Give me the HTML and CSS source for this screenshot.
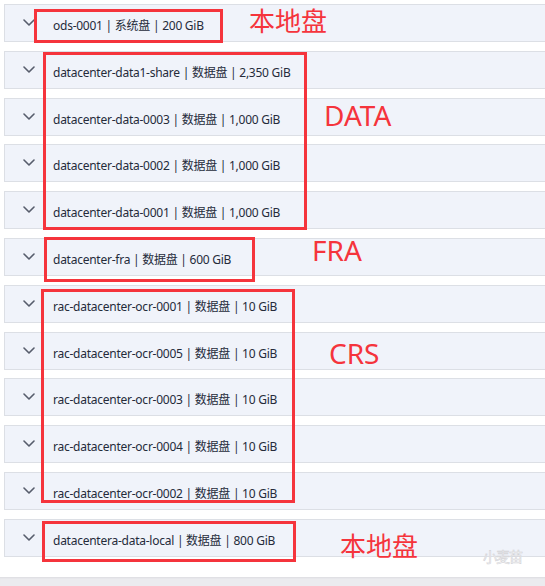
FILE: index.html
```html
<!DOCTYPE html>
<html lang="zh">
<head>
<meta charset="utf-8">
<title>磁盘列表</title>
<link rel="stylesheet" href="styles.css">
</head>
<body>
<div class="page">
  <div class="list">
    <div class="row"><span class="chev"><svg viewBox="0 0 12 7" width="12" height="7"><path d="M1 1 L6 6 L11 1" /></svg></span><span class="label">ods-0001 | 系统盘 | 200 GiB</span></div>
    <div class="row"><span class="chev"><svg viewBox="0 0 12 7" width="12" height="7"><path d="M1 1 L6 6 L11 1" /></svg></span><span class="label">datacenter-data1-share | 数据盘 | 2,350 GiB</span></div>
    <div class="row"><span class="chev"><svg viewBox="0 0 12 7" width="12" height="7"><path d="M1 1 L6 6 L11 1" /></svg></span><span class="label">datacenter-data-0003 | 数据盘 | 1,000 GiB</span></div>
    <div class="row"><span class="chev"><svg viewBox="0 0 12 7" width="12" height="7"><path d="M1 1 L6 6 L11 1" /></svg></span><span class="label">datacenter-data-0002 | 数据盘 | 1,000 GiB</span></div>
    <div class="row"><span class="chev"><svg viewBox="0 0 12 7" width="12" height="7"><path d="M1 1 L6 6 L11 1" /></svg></span><span class="label">datacenter-data-0001 | 数据盘 | 1,000 GiB</span></div>
    <div class="row"><span class="chev"><svg viewBox="0 0 12 7" width="12" height="7"><path d="M1 1 L6 6 L11 1" /></svg></span><span class="label">datacenter-fra | 数据盘 | 600 GiB</span></div>
    <div class="row"><span class="chev"><svg viewBox="0 0 12 7" width="12" height="7"><path d="M1 1 L6 6 L11 1" /></svg></span><span class="label">rac-datacenter-ocr-0001 | 数据盘 | 10 GiB</span></div>
    <div class="row"><span class="chev"><svg viewBox="0 0 12 7" width="12" height="7"><path d="M1 1 L6 6 L11 1" /></svg></span><span class="label">rac-datacenter-ocr-0005 | 数据盘 | 10 GiB</span></div>
    <div class="row"><span class="chev"><svg viewBox="0 0 12 7" width="12" height="7"><path d="M1 1 L6 6 L11 1" /></svg></span><span class="label">rac-datacenter-ocr-0003 | 数据盘 | 10 GiB</span></div>
    <div class="row"><span class="chev"><svg viewBox="0 0 12 7" width="12" height="7"><path d="M1 1 L6 6 L11 1" /></svg></span><span class="label">rac-datacenter-ocr-0004 | 数据盘 | 10 GiB</span></div>
    <div class="row"><span class="chev"><svg viewBox="0 0 12 7" width="12" height="7"><path d="M1 1 L6 6 L11 1" /></svg></span><span class="label">rac-datacenter-ocr-0002 | 数据盘 | 10 GiB</span></div>
    <div class="row"><span class="chev"><svg viewBox="0 0 12 7" width="12" height="7"><path d="M1 1 L6 6 L11 1" /></svg></span><span class="label">datacentera-data-local | 数据盘 | 800 GiB</span></div>
  </div>
  <div class="footer"></div>

  <div class="box box-sys"></div>
  <div class="box box-data"></div>
  <div class="box box-fra"></div>
  <div class="box box-crs"></div>
  <div class="box box-local"></div>

  <div class="note note-sys">本地盘</div>
  <div class="note note-data">DATA</div>
  <div class="note note-fra">FRA</div>
  <div class="note note-crs">CRS</div>
  <div class="note note-local">本地盘</div>

  <div class="watermark">小麦苗</div>
</div>
</body>
</html>
```

FILE: styles.css
```css
html, body {
  margin: 0;
  padding: 0;
  background: #ffffff;
}

body {
  width: 545px;
  height: 586px;
  overflow: hidden;
  font-family: "Noto Sans", "Noto Sans CJK SC", sans-serif;
}

.page {
  position: relative;
  width: 545px;
  height: 586px;
  overflow: hidden;
}

.list {
  display: flex;
  flex-direction: column;
  gap: 8.8px;
  padding: 4px 0 0 4px;
}

.row {
  box-sizing: border-box;
  height: 38px;
  display: flex;
  align-items: center;
  background: #f0f3fa;
  border: 1px solid #dcdfe5;
  border-right: none;
}

.chev {
  display: flex;
  align-items: center;
  margin-left: 18px;
  width: 12px;
  height: 7px;
  margin-top: -1px;
}

.chev svg path {
  fill: none;
  stroke: #575d6c;
  stroke-width: 1.6;
  stroke-linecap: round;
  stroke-linejoin: round;
}

.label {
  margin-left: 18px;
  margin-top: 4px;
  font-size: 12px;
  letter-spacing: -0.25px;
  color: #252b3a;
  white-space: nowrap;
}

.footer {
  margin-top: 20px;
  height: 20px;
  background: #ebebef;
  box-shadow: inset 0 2px 2px -1px #dcdce0;
}

.box {
  position: absolute;
  box-sizing: border-box;
  border: 3px solid #f5343c;
}

.box-sys   { left: 34px; top: 9px;   width: 189px; height: 34px; }
.box-data  { left: 43px; top: 52px;  width: 264px; height: 178px; }
.box-fra   { left: 44px; top: 237px; width: 211px; height: 45px; }
.box-crs   { left: 41px; top: 289px; width: 254px; height: 214px; }
.box-local { left: 42px; top: 521px; width: 254px; height: 41px; }

.note {
  position: absolute;
  color: #f5343c;
  font-family: "Noto Sans", "Noto Sans CJK SC", sans-serif;
  font-size: 28px;
  line-height: 1;
  white-space: nowrap;
}

.note-sys   { left: 249px; top: 8px;   font-size: 26px; }
.note-data  { left: 324px; top: 101px; }
.note-fra   { left: 312px; top: 236px; }
.note-crs   { left: 329px; top: 339px; }
.note-local { left: 340px; top: 533px; font-size: 26px; }

.watermark {
  position: absolute;
  left: 483px;
  top: 549px;
  font-family: "Noto Sans CJK SC", sans-serif;
  font-size: 14px;
  line-height: 1;
  color: #ffffff;
  -webkit-text-stroke: 0.6px #d2d2d6;
  letter-spacing: -1px;
}
```
